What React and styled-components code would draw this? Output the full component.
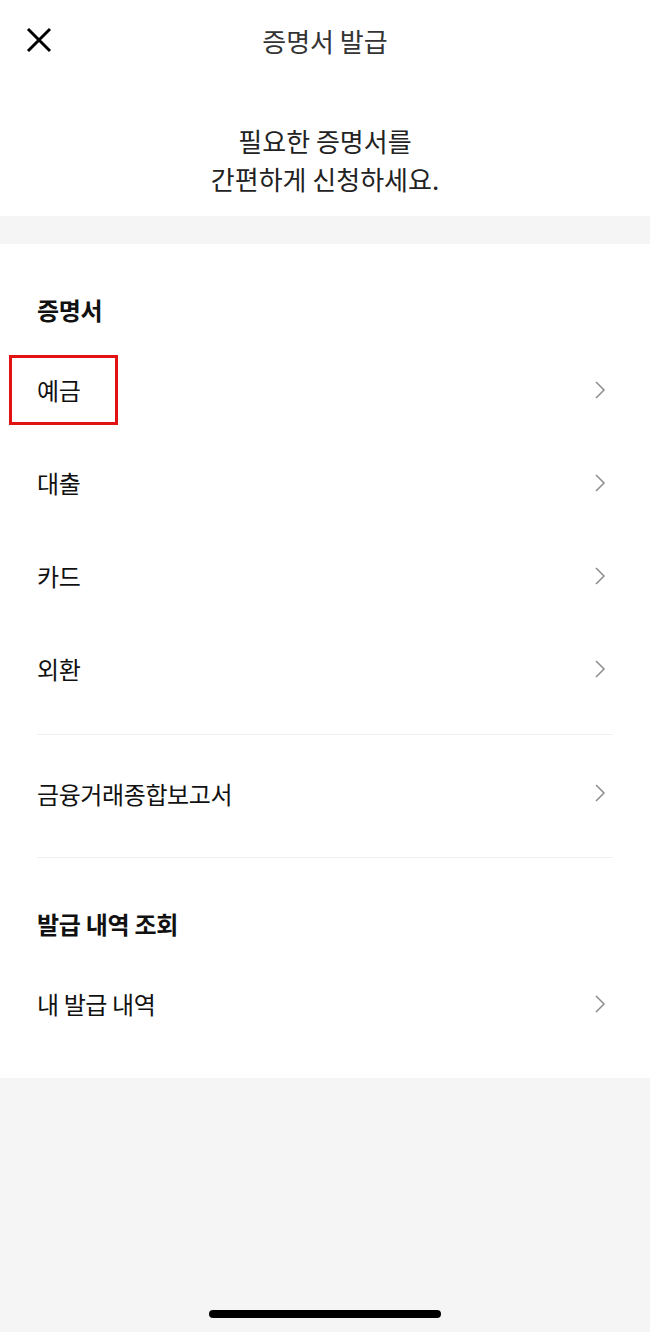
import styled, { createGlobalStyle } from "styled-components";

const GlobalStyle = createGlobalStyle`
  html, body {
    margin: 0;
    padding: 0;
    background: #f5f5f5;
  }
  body {
    font-family: "Noto Sans CJK KR", "Noto Sans", sans-serif;
    color: #111;
  }
`;

const Page = styled.div`
  width: 650px;
  min-height: 1332px;
  display: flex;
  flex-direction: column;
  background: #f5f5f5;
`;

const Header = styled.header`
  height: 80px;
  display: grid;
  grid-template-columns: 80px 1fr 80px;
  align-items: center;
  background: #fff;
`;

const CloseButton = styled.button`
  border: 0;
  background: none;
  padding: 0 0 0 26px;
  display: flex;
  align-items: center;
  cursor: pointer;
`;

const HeaderTitle = styled.h1`
  margin: 0;
  text-align: center;
  font-size: 26px;
  font-weight: 400;
  color: #333;
  letter-spacing: 0;
`;

const Intro = styled.p`
  margin: 0;
  padding: 42px 0 18px;
  background: #fff;
  text-align: center;
  font-size: 26px;
  line-height: 38px;
  color: #222;
  letter-spacing: 0;
`;

const Band = styled.div`
  height: 28px;
`;

const Content = styled.main`
  background: #fff;
  padding: 48px 37px 28px;
`;

const SectionTitle = styled.h2`
  margin: ${(p) => (p.$spaced ? "48px" : "0")} 0 15px;
  font-size: 24px;
  line-height: 36px;
  font-weight: 700;
  color: #111;
  letter-spacing: -0.3px;
`;

const Row = styled.a`
  height: ${(p) => p.$height || 93}px;
  display: flex;
  align-items: center;
  justify-content: space-between;
  text-decoration: none;
  color: #111;
  font-size: 24px;
  letter-spacing: -0.4px;
`;

const Label = styled.span`
  position: relative;
`;

const Highlight = styled.span`
  position: absolute;
  left: -28px;
  right: -38px;
  top: -17px;
  bottom: -18px;
  border: 3px solid #e31212;
`;

const Divider = styled.hr`
  margin: ${(p) => p.$top}px 0 0;
  border: 0;
  height: 1px;
  background: #f0f0f0;
`;

const Filler = styled.div`
  flex: 1;
  display: flex;
  align-items: flex-end;
  justify-content: center;
  padding-bottom: 14px;
`;

const HomeIndicator = styled.div`
  width: 232px;
  height: 8px;
  border-radius: 4px;
  background: #000;
`;

const Chevron = () => (
  <svg width="16" height="20" viewBox="0 0 16 20" style={{ marginRight: 5 }}>
    <path d="M4 2 L12 10 L4 18" fill="none" stroke="#8c8c8c" strokeWidth="1.5" />
  </svg>
);

const CloseIcon = () => (
  <svg width="26" height="26" viewBox="0 0 26 26">
    <path d="M2 2 L24 24 M24 2 L2 24" stroke="#000" strokeWidth="3" />
  </svg>
);

const certs = ["예금", "대출", "카드", "외환"];

export default function App() {
  return (
    <Page>
      <GlobalStyle />
      <Header>
        <CloseButton aria-label="닫기">
          <CloseIcon />
        </CloseButton>
        <HeaderTitle>증명서 발급</HeaderTitle>
        <span />
      </Header>
      <Intro>
        필요한 증명서를
        <br />
        간편하게 신청하세요.
      </Intro>
      <Band />
      <Content>
        <SectionTitle>증명서</SectionTitle>
        {certs.map((name, i) => (
          <Row key={name} href="#">
            <Label>
              {name}
              {i === 0 && <Highlight />}
            </Label>
            <Chevron />
          </Row>
        ))}
        <Divider $top={19} />
        <Row href="#" $height={116}>
          <Label>금융거래종합보고서</Label>
          <Chevron />
        </Row>
        <Divider $top={6} />
        <SectionTitle $spaced>발급 내역 조회</SectionTitle>
        <Row href="#">
          <Label>내 발급 내역</Label>
          <Chevron />
        </Row>
      </Content>
      <Filler>
        <HomeIndicator />
      </Filler>
    </Page>
  );
}
